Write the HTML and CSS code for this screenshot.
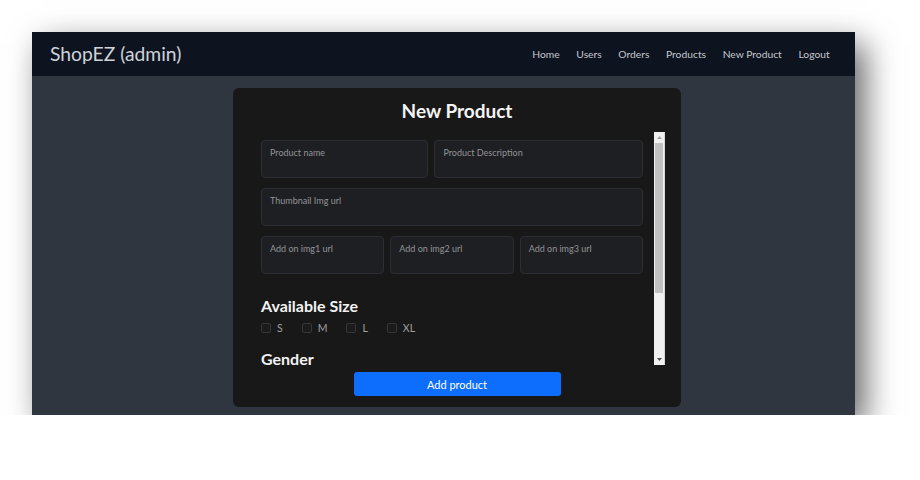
FILE: index.html
```html
<!DOCTYPE html>
<html lang="en">
<head>
<meta charset="utf-8">
<title>ShopEZ (admin) - New Product</title>
<link rel="stylesheet" href="styles.css">
</head>
<body>
<div class="screen">
  <nav class="navbar">
    <span class="brand">ShopEZ (admin)</span>
    <ul class="nav-links">
      <li><a href="#">Home</a></li>
      <li><a href="#">Users</a></li>
      <li><a href="#">Orders</a></li>
      <li><a href="#">Products</a></li>
      <li><a href="#">New Product</a></li>
      <li><a href="#">Logout</a></li>
    </ul>
  </nav>
  <main class="content">
    <div class="card">
      <h3 class="card-title">New Product</h3>
      <form class="product-form">
        <div class="form-frame">
          <div class="form-scroll">
            <div class="row row-2">
              <div class="floating"><input type="text" placeholder=" "><label>Product name</label></div>
              <div class="floating"><input type="text" placeholder=" "><label>Product Description</label></div>
            </div>
            <div class="row">
              <div class="floating"><input type="text" placeholder=" "><label>Thumbnail Img url</label></div>
            </div>
            <div class="row row-3">
              <div class="floating"><input type="text" placeholder=" "><label>Add on img1 url</label></div>
              <div class="floating"><input type="text" placeholder=" "><label>Add on img2 url</label></div>
              <div class="floating"><input type="text" placeholder=" "><label>Add on img3 url</label></div>
            </div>
            <h4 class="section-title">Available Size</h4>
            <div class="checks">
              <label class="check"><input type="checkbox"><span>S</span></label>
              <label class="check"><input type="checkbox"><span>M</span></label>
              <label class="check"><input type="checkbox"><span>L</span></label>
              <label class="check"><input type="checkbox"><span>XL</span></label>
            </div>
            <h4 class="section-title">Gender</h4>
          </div>
          <div class="scrollbar" aria-hidden="true">
            <div class="sb-button">
              <svg width="5" height="3" viewBox="0 0 5 3"><polygon points="2.5,0 5,3 0,3" fill="#a3a3a3"/></svg>
            </div>
            <div class="sb-track"><div class="sb-thumb"></div></div>
            <div class="sb-button">
              <svg width="5" height="3" viewBox="0 0 5 3"><polygon points="0,0 5,0 2.5,3" fill="#505050"/></svg>
            </div>
          </div>
        </div>
        <button type="button" class="submit">Add product</button>
      </form>
    </div>
  </main>
</div>
</body>
</html>
```
FILE: styles.css
```css
* { box-sizing: border-box; }

html, body {
  margin: 0;
  padding: 0;
  background: #ffffff;
}

body {
  padding: 32px 0 0 32px;
  font-family: "Lato", "Noto Sans", sans-serif;
}

.screen {
  width: 823px;
  height: 383px;
  background: #30363f;
  box-shadow: 10px 12px 30px rgba(0, 0, 0, 0.6);
  display: flex;
  flex-direction: column;
}

.navbar {
  height: 44px;
  flex: none;
  background: #0e1320;
  display: flex;
  align-items: center;
  justify-content: space-between;
  padding: 0 17px 0 18px;
}

.brand {
  color: #cfd3d9;
  font-size: 19.3px;
  line-height: 24px;
}

.nav-links {
  list-style: none;
  margin: 0;
  padding: 0;
  display: flex;
}

.nav-links a {
  display: block;
  padding: 0 8.3px;
  color: #c3c7cd;
  text-decoration: none;
  font-size: 10.3px;
  line-height: 16px;
}

.content {
  flex: 1;
  display: flex;
  justify-content: center;
  padding: 12px 0 0 27px;
}

.card {
  width: 448px;
  height: 319px;
  background: #181818;
  border-radius: 6px;
  padding: 9px 16px 11px;
  display: flex;
  flex-direction: column;
}

.card-title {
  margin: 0;
  text-align: center;
  color: #f4f4f4;
  font-size: 19px;
  line-height: 28px;
  font-weight: 700;
}

.product-form {
  flex: 1;
  display: flex;
  flex-direction: column;
  align-items: center;
  margin-top: 7px;
}

.form-frame {
  align-self: stretch;
  height: 233px;
  display: flex;
}

.form-scroll {
  flex: 1;
  padding: 8px 11px 0 12px;
}

.scrollbar {
  width: 11px;
  flex: none;
  display: flex;
  flex-direction: column;
  background: #f1f1f1;
  border-right: 1px solid #d6d6d6;
}

.sb-button {
  height: 11px;
  flex: none;
  display: flex;
  align-items: center;
  justify-content: center;
}

.sb-button svg { display: block; }

.sb-track {
  flex: 1;
}

.sb-thumb {
  height: 150px;
  margin: 0 1px 0 1px;
  background: #c1c1c1;
}

.row {
  display: grid;
  grid-template-columns: 1fr;
  gap: 6px;
  margin-bottom: 10px;
}

.row-2 { grid-template-columns: 167fr 208fr; }
.row-3 { grid-template-columns: repeat(3, 1fr); }

.floating {
  position: relative;
}

.floating input {
  display: block;
  width: 100%;
  height: 38px;
  background: #1e1f22;
  border: 1px solid #2d2e32;
  border-radius: 4px;
  outline: none;
  color: #ddd;
  font-family: inherit;
  font-size: 10px;
  padding: 16px 8px 4px;
}

.floating label {
  position: absolute;
  top: 7px;
  left: 9px;
  color: #939498;
  font-size: 9px;
  line-height: 12px;
  pointer-events: none;
}

.section-title {
  margin: 25px 0 9px;
  color: #f2f2f2;
  font-size: 16px;
  line-height: 13px;
  font-weight: 700;
}

.checks {
  display: flex;
  gap: 19px;
}

.check {
  display: inline-flex;
  align-items: center;
  gap: 6px;
  color: #a0a0a0;
  font-size: 10.5px;
  line-height: 14px;
}

.check input {
  appearance: none;
  -webkit-appearance: none;
  margin: 0;
  width: 10px;
  height: 10px;
  border: 1px solid #36373a;
  border-radius: 2px;
  background: #1b1b1c;
}

.checks + .section-title { margin-top: 17px; margin-bottom: 0; }

.submit {
  width: 207px;
  height: 24px;
  margin-top: 7px;
  background: #0d6efd;
  color: #ffffff;
  border: none;
  border-radius: 3px;
  font-family: inherit;
  font-size: 11px;
  cursor: pointer;
}
```
